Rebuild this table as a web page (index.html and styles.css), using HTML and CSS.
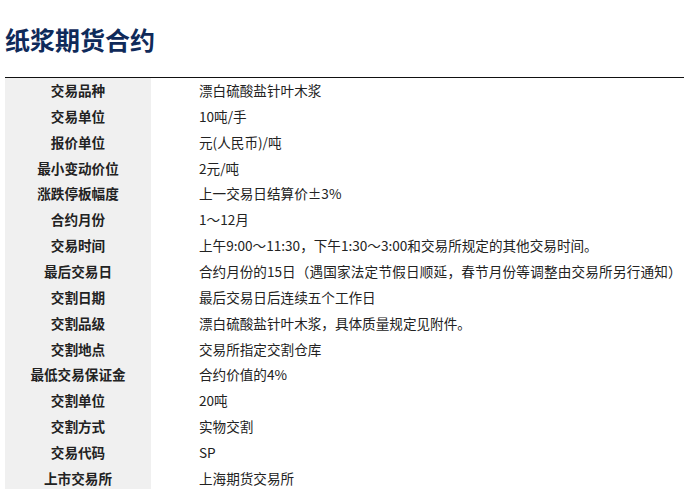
FILE: index.html
```html
<!DOCTYPE html>
<html lang="zh">
<head>
<meta charset="utf-8">
<link rel="stylesheet" href="styles.css">
</head>
<body>
<div class="page">
  <h1 class="title">纸浆期货合约</h1>
  <div class="spec">
    <div class="lbl">交易品种</div><div class="val">漂白硫酸盐针叶木浆</div>
    <div class="lbl">交易单位</div><div class="val">10吨/手</div>
    <div class="lbl">报价单位</div><div class="val">元(人民币)/吨</div>
    <div class="lbl">最小变动价位</div><div class="val">2元/吨</div>
    <div class="lbl">涨跌停板幅度</div><div class="val">上一交易日结算价±3%</div>
    <div class="lbl">合约月份</div><div class="val">1～12月</div>
    <div class="lbl">交易时间</div><div class="val">上午9:00～11:30，下午1:30～3:00和交易所规定的其他交易时间。</div>
    <div class="lbl">最后交易日</div><div class="val"><span>合约月份的15日</span><span class="paren">（遇国家法定节假日顺延，春节月份等调整由交易所另行通知）</span></div>
    <div class="lbl">交割日期</div><div class="val">最后交易日后连续五个工作日</div>
    <div class="lbl">交割品级</div><div class="val">漂白硫酸盐针叶木浆，具体质量规定见附件。</div>
    <div class="lbl">交割地点</div><div class="val">交易所指定交割仓库</div>
    <div class="lbl">最低交易保证金</div><div class="val">合约价值的4%</div>
    <div class="lbl">交割单位</div><div class="val">20吨</div>
    <div class="lbl">交割方式</div><div class="val">实物交割</div>
    <div class="lbl">交易代码</div><div class="val">SP</div>
    <div class="lbl">上市交易所</div><div class="val">上海期货交易所</div>
  </div>
</div>
</body>
</html>
```

FILE: styles.css
```css
html, body {
  margin: 0;
  padding: 0;
  background: #fff;
}
.page {
  padding: 0 0 0 5px;
  font-family: "Noto Sans CJK SC", "Noto Sans", sans-serif;
  color: #222;
}
.title {
  margin: 0;
  padding-top: 20px;
  height: 77px;
  box-sizing: border-box;
  font-size: 25px;
  line-height: 38px;
  font-weight: 700;
  color: #0f2a5a;
}
.spec {
  border-top: 1px solid #111;
  display: grid;
  grid-template-columns: 146px 1fr;
  grid-auto-rows: 25.87px;
  font-size: 13.6px;
}
.lbl {
  background: #f0f0f0;
  font-weight: 700;
  display: flex;
  align-items: center;
  justify-content: center;
  padding-bottom: 2px;
  color: #222;
}
.val {
  padding-left: 48px;
  padding-bottom: 2px;
  display: flex;
  align-items: center;
  white-space: nowrap;
  color: #222;
}
.paren {
  letter-spacing: 0.2px;
}
```
